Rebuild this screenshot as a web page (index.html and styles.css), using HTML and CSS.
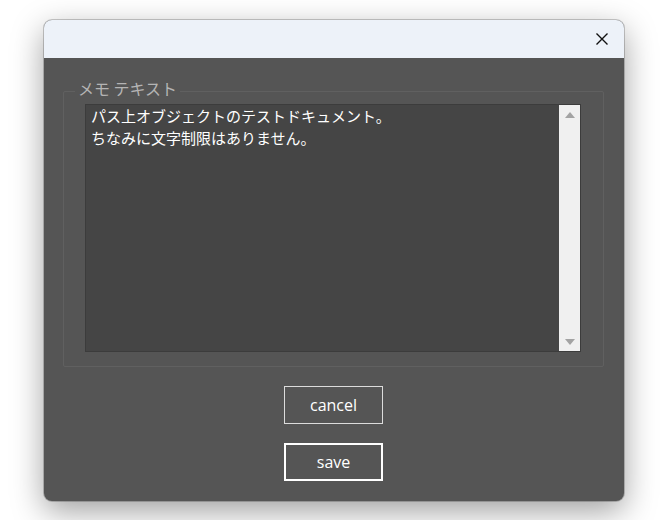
FILE: index.html
```html
<!DOCTYPE html>
<html>

<head>
    <meta charset="UTF-8">
    <title>メモ</title>
    <link rel="stylesheet" href="styles.css">
</head>

<body>
    <div class="dialog">
        <div class="titlebar">
            <button class="close" aria-label="close">
                <svg width="14" height="14" viewBox="0 0 14 14">
                    <path d="M1.5 1.5 L12.5 12.5 M12.5 1.5 L1.5 12.5" stroke="#111" stroke-width="1.4" fill="none"/>
                </svg>
            </button>
        </div>
        <div class="content">
            <fieldset class="memo">
                <legend>メモ テキスト</legend>
                <div class="memo-inner">
                    <div class="textbox">
                        <div class="text">パス上オブジェクトのテストドキュメント。<br>ちなみに文字制限はありません。</div>
                        <div class="scrollbar">
                            <span class="arrow up"></span>
                            <span class="arrow down"></span>
                        </div>
                    </div>
                </div>
            </fieldset>
            <div class="buttons">
                <button class="btn">cancel</button>
                <button class="btn primary">save</button>
            </div>
        </div>
    </div>
</body>

</html>
```

FILE: styles.css
```css
html,
body {
    margin: 0;
    height: 100%;
    background: #ffffff;
    font-family: "Open Sans", "Noto Sans CJK JP", sans-serif;
}

body {
    box-sizing: border-box;
    padding: 20px 0 0 44px;
    overflow: hidden;
}

.dialog {
    width: 580px;
    height: 481px;
    border-radius: 8px;
    overflow: hidden;
    display: flex;
    flex-direction: column;
    background: #555555;
    box-shadow: 0 0 0 1px rgba(0, 0, 0, 0.2), 0 10px 32px rgba(0, 0, 0, 0.38);
}

.titlebar {
    height: 38px;
    background: #edf2f9;
    display: flex;
    justify-content: flex-end;
    align-items: center;
}

.close {
    width: 38px;
    height: 38px;
    border: none;
    background: none;
    padding: 0;
    margin-right: 3px;
    display: flex;
    align-items: center;
    justify-content: center;
}

.content {
    flex: 1;
    padding: 20px 20px 20px 19px;
    display: flex;
    flex-direction: column;
    align-items: center;
}

.memo {
    width: 541px;
    box-sizing: border-box;
    margin: 0;
    padding: 0;
    border: 1px solid #606060;
    border-radius: 2px;
}

.memo legend {
    margin-left: 11px;
    padding: 0 3px 6px;
    font-size: 16px;
    line-height: 20px;
    color: #b4b4b4;
    font-family: "Noto Sans CJK JP", sans-serif;
}

.memo-inner {
    padding: 0 22px 14px 21px;
}

.textbox {
    height: 248px;
    box-sizing: border-box;
    border: 1px solid #3c3c3c;
    background: #454545;
    display: flex;
}

.text {
    flex: 1;
    padding: 0 5px;
    font-family: "Noto Sans CJK JP", sans-serif;
    font-size: 15px;
    line-height: 22px;
    color: #ffffff;
}

.scrollbar {
    width: 21px;
    background: #f0f0f0;
    display: flex;
    flex-direction: column;
    justify-content: space-between;
    align-items: center;
    padding: 7px 0 6px;
}

.arrow {
    width: 0;
    height: 0;
    border-left: 5px solid transparent;
    border-right: 5px solid transparent;
}

.arrow.up {
    border-bottom: 6px solid #a3a3a3;
}

.arrow.down {
    border-top: 6px solid #a3a3a3;
}

.buttons {
    margin-top: 19px;
    display: flex;
    flex-direction: column;
    gap: 19px;
}

.btn {
    width: 99px;
    height: 38px;
    box-sizing: border-box;
    background: transparent;
    border: 1px solid #dcdcdc;
    color: #ffffff;
    font-family: "Open Sans", sans-serif;
    font-size: 16px;
    padding: 0;
}

.btn.primary {
    border: 2px solid #ffffff;
}
```
